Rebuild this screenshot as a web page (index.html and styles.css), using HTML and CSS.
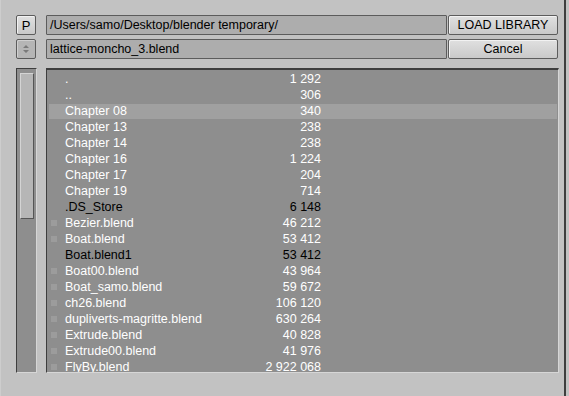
FILE: index.html
```html
<!DOCTYPE html>
<html lang="en">
<head>
  <meta charset="UTF-8" />
  <title>Load Library</title>
  <link rel="stylesheet" href="styles.css">
</head>
<body>

<div class="window">
  <div class="bar">
    <button type="button" class="btn small">P</button>
    <div class="field">/Users/samo/Desktop/blender temporary/</div>
    <button type="button" class="btn action">LOAD LIBRARY</button>
  </div>
  <div class="bar">
    <button type="button" class="btn small menu">
      <svg width="8" height="10" viewBox="0 0 8 10"><path d="M4 1 L7 4 H1 Z M4 9 L7 6 H1 Z" fill="#7a7a7a"/></svg>
    </button>
    <div class="field">lattice-moncho_3.blend</div>
    <button type="button" class="btn action">Cancel</button>
  </div>

  <div class="main">
    <div class="scroll"><div class="thumb"></div></div>
    <div class="files">
      <div class="row"><span></span><span class="name">.</span><span class="size">1 292</span></div>
      <div class="row"><span></span><span class="name">..</span><span class="size">306</span></div>
      <div class="row active"><span></span><span class="name">Chapter 08</span><span class="size">340</span></div>
      <div class="row"><span></span><span class="name">Chapter 13</span><span class="size">238</span></div>
      <div class="row"><span></span><span class="name">Chapter 14</span><span class="size">238</span></div>
      <div class="row"><span></span><span class="name">Chapter 16</span><span class="size">1 224</span></div>
      <div class="row"><span></span><span class="name">Chapter 17</span><span class="size">204</span></div>
      <div class="row"><span></span><span class="name">Chapter 19</span><span class="size">714</span></div>
      <div class="row dark"><span></span><span class="name">.DS_Store</span><span class="size">6 148</span></div>
      <div class="row"><span class="mark"></span><span class="name">Bezier.blend</span><span class="size">46 212</span></div>
      <div class="row"><span class="mark"></span><span class="name">Boat.blend</span><span class="size">53 412</span></div>
      <div class="row dark"><span></span><span class="name">Boat.blend1</span><span class="size">53 412</span></div>
      <div class="row"><span class="mark"></span><span class="name">Boat00.blend</span><span class="size">43 964</span></div>
      <div class="row"><span class="mark"></span><span class="name">Boat_samo.blend</span><span class="size">59 672</span></div>
      <div class="row"><span class="mark"></span><span class="name">ch26.blend</span><span class="size">106 120</span></div>
      <div class="row"><span class="mark"></span><span class="name">dupliverts-magritte.blend</span><span class="size">630 264</span></div>
      <div class="row"><span class="mark"></span><span class="name">Extrude.blend</span><span class="size">40 828</span></div>
      <div class="row"><span class="mark"></span><span class="name">Extrude00.blend</span><span class="size">41 976</span></div>
      <div class="row"><span class="mark"></span><span class="name">FlyBy.blend</span><span class="size">2 922 068</span></div>
    </div>
  </div>
</div>

</body>
</html>
```

FILE: styles.css
```css
html, body {
  margin: 0;
  padding: 0;
}
body {
  background: #c2c2c2;
  font-family: "Liberation Sans", Arial, sans-serif;
  font-size: 12.5px;
}
.window {
  display: flex;
  flex-direction: column;
  gap: 4px;
  width: 566px;
  height: 396px;
  box-sizing: border-box;
  padding: 15px 0 0 15px;
  border-left: 1px solid #cdcdcd;
  border-right: 2px solid #3e3e3e;
}
.bar {
  display: flex;
  height: 20px;
}
.btn {
  box-sizing: border-box;
  height: 20px;
  margin: 0;
  padding: 0;
  border: 1px solid #5c5c5c;
  border-radius: 2px;
  background: linear-gradient(#e0e0e0, #c9c9c9);
  box-shadow: inset 1px 1px 0 #f2f2f2;
  font-family: inherit;
  font-size: 12.5px;
  color: #000;
}
.small {
  width: 20px;
  margin-right: 10px;
  font-size: 13px;
}
.menu {
  background: #b5b5b5;
  box-shadow: inset 1px 1px 0 #cfcfcf;
  display: flex;
  align-items: center;
  justify-content: center;
}
.field {
  box-sizing: border-box;
  width: 401px;
  height: 20px;
  line-height: 18px;
  padding-left: 3px;
  border: 1px solid #5c5c5c;
  border-radius: 1px;
  background: #adadad;
  color: #000;
}
.action {
  width: 110px;
  margin-left: 1px;
}
.main {
  display: flex;
  margin-top: 5px;
  height: 305px;
}
.scroll {
  box-sizing: border-box;
  width: 21px;
  height: 305px;
  margin-right: 9px;
  padding: 4px 0 0 3px;
  background: #8e8e8e;
  border-left: 1px solid #3e3e3e;
  border-top: 1px solid #3e3e3e;
  border-right: 1px solid #d6d6d6;
  border-bottom: 1px solid #d6d6d6;
}
.thumb {
  box-sizing: border-box;
  width: 14px;
  height: 146px;
  background: #b6b6b6;
  border-left: 1px solid #d4d4d4;
  border-top: 1px solid #d4d4d4;
  border-right: 1px solid #555;
  border-bottom: 1px solid #555;
}
.files {
  box-sizing: border-box;
  width: 513px;
  height: 305px;
  overflow: hidden;
  padding: 1px 1px 0 2px;
  background: #8e8e8e;
  border-left: 1px solid #3e3e3e;
  border-top: 2px solid #3e3e3e;
  border-right: 1px solid #d6d6d6;
  border-bottom: 1px solid #d6d6d6;
  color: #fff;
}
.row {
  display: grid;
  grid-template-columns: 16px 140px 116px;
  align-items: center;
  height: 16px;
  line-height: 16px;
  white-space: nowrap;
}
.row.active {
  background: #a0a0a0;
  box-shadow: inset 0 1px 0 #8e8e8e;
}
.row.dark {
  color: #000;
}
.mark {
  width: 6px;
  height: 6px;
  margin-left: 2px;
  background: #9c9c9c;
}
.size {
  text-align: right;
}
```
